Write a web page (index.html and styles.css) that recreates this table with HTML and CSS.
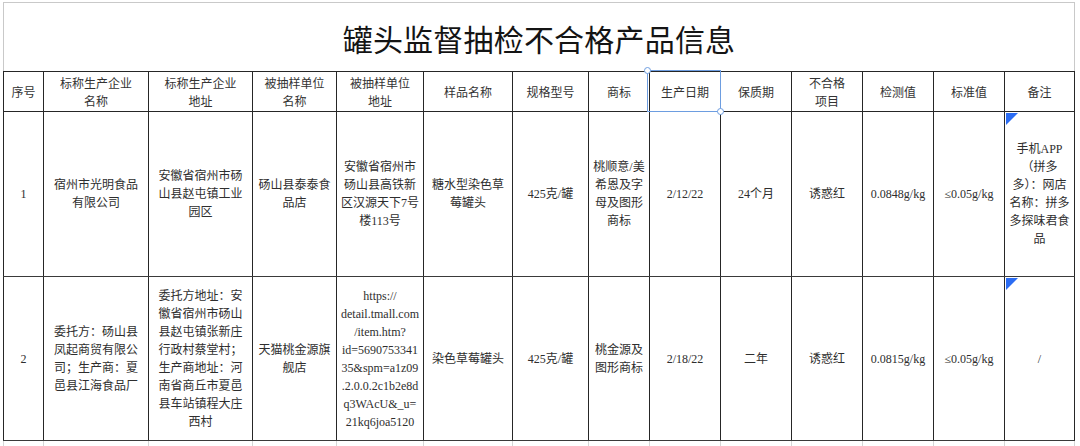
FILE: index.html
```html
<!DOCTYPE html>
<html lang="zh-CN">
<head>
<meta charset="utf-8">
<title>罐头监督抽检不合格产品信息</title>
<link rel="stylesheet" href="styles.css">
</head>
<body>
<div class="sheet">
  <div class="title">罐头监督抽检不合格产品信息</div>
  <table class="grid">
    <colgroup>
      <col class="w40"><col class="w105"><col class="w104"><col class="w84"><col class="w87"><col class="w89"><col class="w76"><col class="w61"><col class="w71"><col class="w71"><col class="w71"><col class="w71"><col class="w71"><col class="w70">
    </colgroup>
    <thead>
      <tr class="head">
        <th>序号</th>
        <th>标称生产企业<br>名称</th>
        <th>标称生产企业<br>地址</th>
        <th>被抽样单位<br>名称</th>
        <th>被抽样单位<br>地址</th>
        <th>样品名称</th>
        <th>规格型号</th>
        <th>商标</th>
        <th class="sel">生产日期<span class="selbox"><span class="handle tl"></span><span class="handle br"></span></span></th>
        <th>保质期</th>
        <th>不合格<br>项目</th>
        <th>检测值</th>
        <th>标准值</th>
        <th>备注</th>
      </tr>
    </thead>
    <tbody>
      <tr class="row1">
        <td>1</td>
        <td>宿州市光明食品<br>有限公司</td>
        <td>安徽省宿州市砀<br>山县赵屯镇工业<br>园区</td>
        <td>砀山县泰泰食<br>品店</td>
        <td>安徽省宿州市<br>砀山县高铁新<br>区汉源天下7号<br>楼113号</td>
        <td>糖水型染色草<br>莓罐头</td>
        <td>425克/罐</td>
        <td>桃顺意/美<br>希恩及字<br>母及图形<br>商标</td>
        <td>2/12/22</td>
        <td>24个月</td>
        <td>诱惑红</td>
        <td>0.0848g/kg</td>
        <td>≤0.05g/kg</td>
        <td class="note">手机APP<br>（拼多<br>多）：网店<br>名称：拼多<br>多探味君食<br>品</td>
      </tr>
      <tr class="row2">
        <td>2</td>
        <td>委托方：砀山县<br>凤起商贸有限公<br>司；生产商：夏<br>邑县江海食品厂</td>
        <td>委托方地址：安<br>徽省宿州市砀山<br>县赵屯镇张新庄<br>行政村蔡堂村；<br>生产商地址：河<br>南省商丘市夏邑<br>县车站镇程大庄<br>西村</td>
        <td>天猫桃金源旗<br>舰店</td>
        <td class="url">https://<br>detail.tmall.com<br>/item.htm?<br>id=5690753341<br>35&amp;spm=a1z09<br>.2.0.0.2c1b2e8d<br>q3WAcU&amp;_u=<br>21kq6joa5120</td>
        <td>染色草莓罐头</td>
        <td>425克/罐</td>
        <td>桃金源及<br>图形商标</td>
        <td>2/18/22</td>
        <td>二年</td>
        <td>诱惑红</td>
        <td>0.0815g/kg</td>
        <td>≤0.05g/kg</td>
        <td class="note">/</td>
      </tr>
      <tr class="row3">
        <td></td><td></td><td></td><td></td><td></td><td></td><td></td><td></td><td></td><td></td><td></td><td></td><td></td><td></td>
      </tr>
    </tbody>
  </table>
</div>
</body>
</html>
```
FILE: styles.css
```css
html, body {
  margin: 0;
  padding: 0;
  background: #ffffff;
  overflow: hidden;
}

.sheet {
  margin: 2px 0 0 3px;
  width: 1072px;
}

.title {
  box-sizing: border-box;
  height: 69px;
  border-top: 1px solid #c9c9c9;
  border-left: 1px solid #c9c9c9;
  border-right: 1px solid #c9c9c9;
  display: flex;
  align-items: center;
  justify-content: center;
  font-family: "Noto Sans CJK SC", "Noto Sans", sans-serif;
  font-size: 30px;
  color: #141414;
  letter-spacing: 0.2px;
  padding-top: 1px;
}

.grid {
  border-collapse: collapse;
  table-layout: fixed;
  width: 1072px;
}

.w40 { width: 40px; }
.w105 { width: 105px; }
.w104 { width: 104px; }
.w84 { width: 84px; }
.w87 { width: 87px; }
.w89 { width: 89px; }
.w76 { width: 76px; }
.w61 { width: 61px; }
.w71 { width: 71px; }
.w70 { width: 70px; }

.grid th,
.grid td {
  border: 1px solid #262626;
  padding: 0 2px;
  text-align: center;
  vertical-align: middle;
  line-height: 18px;
}

.grid th {
  font-family: "Noto Sans CJK SC", "Noto Sans", sans-serif;
  font-weight: 400;
  font-size: 12px;
  color: #333333;
}

.grid td {
  font-family: "Liberation Serif", "Noto Sans CJK SC", serif;
  font-size: 12px;
  color: #2e2e2e;
  white-space: nowrap;
  overflow: hidden;
}

.head { height: 40px; }
.row1 { height: 165px; }
.row2 { height: 164px; }
.row3 { height: 30px; }

.row1 td,
.row2 td {
  border-bottom-color: #3a3a3a;
}

.row3 td {
  border-color: #d6d6d6;
}

.sel {
  position: relative;
}

.selbox {
  position: absolute;
  top: -2px;
  left: -3px;
  right: -1px;
  bottom: -1px;
  border: 1px solid #6d9de0;
  pointer-events: none;
  z-index: 2;
}

.handle {
  position: absolute;
  width: 5px;
  height: 5px;
  border: 1px solid #6d9de0;
  border-radius: 50%;
  background: #ffffff;
}

.handle.tl { top: -4px; left: -4px; }
.handle.br { bottom: -4px; right: -4px; }

.note {
  position: relative;
}

.note::before {
  content: "";
  position: absolute;
  top: 1px;
  left: 1px;
  width: 0;
  height: 0;
  border-top: 12px solid #2b6cf3;
  border-right: 12px solid transparent;
}
```
